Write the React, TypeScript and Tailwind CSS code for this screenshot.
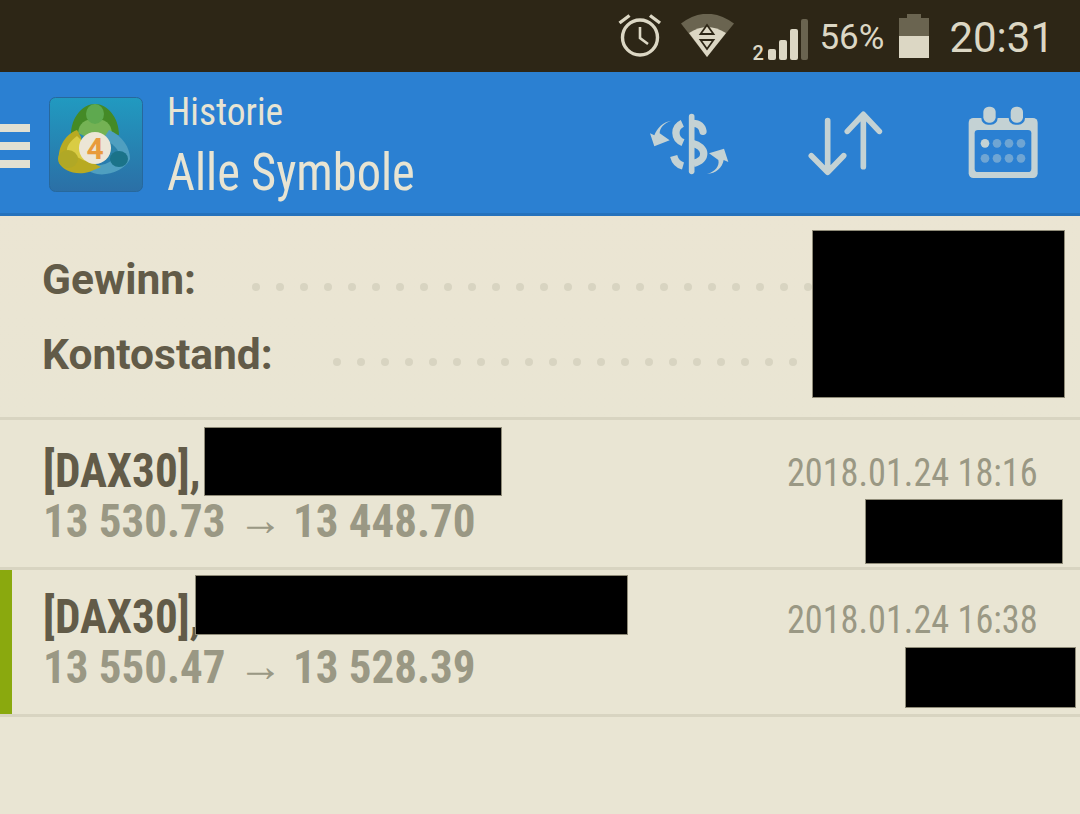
const cond = "[font-stretch:75%]";

function AlarmIcon() {
  return (
    <svg width="44" height="44" viewBox="618 15 44 44" fill="none" stroke="#dcd7c4" strokeWidth="3.4" className="shrink-0">
      <circle cx="640" cy="38.5" r="17.5" />
      <path d="M640 28v11l8 6" strokeWidth="2.6" />
      <path d="M619.5 24l10-7.5M650 16.5l10 7.5" />
    </svg>
  );
}

function WifiIcon() {
  return (
    <svg width="54" height="44" viewBox="681 14 54 44" className="shrink-0">
      <path d="M681 23.5Q707 4 734 23.5L707 57Z" fill="#6a6450" />
      <path d="M689 33Q707 21 726 33L707 57Z" fill="#dcd7c4" />
      <path d="M707 25l6.5 9h-13Z" fill="#dcd7c4" stroke="#2d2616" strokeWidth="1.8" />
      <path d="M700.5 40h13l-6.5 9Z" fill="#dcd7c4" stroke="#2d2616" strokeWidth="1.8" />
    </svg>
  );
}

function SignalBars() {
  return (
    <div className="flex items-end gap-[3px] h-[41px] shrink-0">
      <div className="w-[8px] h-[11px] rounded-[2px] bg-[#dcd7c4]" />
      <div className="w-[8px] h-[20px] rounded-[2px] bg-[#dcd7c4]" />
      <div className="w-[8px] h-[31px] rounded-[2px] bg-[#dcd7c4]" />
      <div className="w-[7px] h-[41px] rounded-[2px] bg-[#6a6450]" />
    </div>
  );
}

function BatteryIcon() {
  return (
    <svg width="30" height="44" viewBox="0 0 30 44" className="shrink-0">
      <path d="M8 0h14v4h8v18H0V4h8Z" fill="#6a6450" />
      <rect x="0" y="22" width="30" height="22" fill="#dcd7c4" />
    </svg>
  );
}

function Logo() {
  return (
    <svg width="94" height="95" viewBox="0 0 94 95" className="shrink-0 ml-[19px] mt-[3px]">
      <defs>
        <linearGradient id="logoBg" x1="0" y1="0" x2="0" y2="1">
          <stop offset="0" stopColor="#219ac0" />
          <stop offset="1" stopColor="#2b6fa6" />
        </linearGradient>
      </defs>
      <rect x="0.5" y="0.5" width="93" height="94" rx="6" fill="url(#logoBg)" stroke="#27689c" />
      {/* green figure */}
      <path d="M22 38C22 20 34 7 46 7s24 13 24 31L58 36 34 36Z" fill="#448a26" />
      <path d="M29 36C30 26 36 22 46 22s16 4 17 14L46 44Z" fill="#74b254" />
      <ellipse cx="46" cy="17" rx="9" ry="10" fill="#5ea94f" />
      {/* blue figure */}
      <path d="M60 33C74 39 81 51 81 62 76 73 60 79 48 77 40 75 34 71 29 65 42 70 56 70 64 62 66 53 61 45 54 42Z" fill="#4f9fc0" />
      <path d="M58 44C66 48 70 54 70 58L54 64Z" fill="#2b82a8" />
      <ellipse cx="70" cy="62" rx="9" ry="8" fill="#1b7389" />
      {/* yellow figure */}
      <path d="M28 33C15 38 8 52 10 66 14 73 26 79 40 75L52 70C44 66 36 60 34 52L32 40Z" fill="#b8aa22" />
      <path d="M28 39C21 44 17 50 18 55L36 64 33 44Z" fill="#d9cc44" />
      <ellipse cx="19" cy="62" rx="10" ry="9" fill="#b0a826" />
      {/* badge */}
      <circle cx="46" cy="51" r="16" fill="#ece6d6" />
      <text x="46" y="62" textAnchor="middle" fontSize="30" fontWeight="700" fill="#e89b3c" fontFamily="Roboto, sans-serif">4</text>
    </svg>
  );
}

function SwapDollarIcon() {
  return (
    <svg width="80" height="64" viewBox="60 60 240 192" fill="none" stroke="#c4d2d4" strokeWidth="22" strokeLinecap="round" className="shrink-0">
      <path d="M188 74V238" strokeWidth="17" />
      <path d="M192 94C210 94 220 104 222 118" />
      <path d="M160 94C134 106 134 140 162 152" strokeLinecap="butt" />
      <path d="M190 154C234 164 236 204 194 214" strokeLinecap="butt" />
      <path d="M134 192C138 208 148 218 162 222" strokeLinecap="butt" />
      <path d="M127 86C104 94 92 108 92 124L122 145 76 163 63 124 76 130C84 108 102 90 127 86Z" fill="#c4d2d4" stroke="none" />
      <path d="M234 246C260 238 272 222 268 204L240 184 285 170 298 210 284 204C280 228 260 244 234 246Z" fill="#c4d2d4" stroke="none" />
    </svg>
  );
}

function SortIcon() {
  return (
    <svg width="78" height="67" viewBox="530 60 234 201" fill="none" stroke="#c4d2d4" strokeWidth="17" strokeLinecap="round" strokeLinejoin="round" className="shrink-0">
      <path d="M595 92V246M546 197l49 50 48-50" />
      <path d="M702 230V74M654 124l48-51 48 51" />
    </svg>
  );
}

function CalendarIcon() {
  const dots = [1063, 1099, 1135, 1171];
  return (
    <svg width="70" height="73" viewBox="1012 48 210 219" className="shrink-0">
      <rect x="1014" y="84" width="207" height="180" rx="14" fill="#c4d2d4" />
      <rect x="1032" y="120" width="170" height="126" rx="10" fill="#2b80d2" />
      <rect x="1052" y="44" width="49" height="60" rx="20" fill="#2b80d2" />
      <rect x="1134" y="44" width="49" height="60" rx="20" fill="#2b80d2" />
      <rect x="1058" y="50" width="37" height="48" rx="16" fill="#c4d2d4" />
      <rect x="1140" y="50" width="37" height="48" rx="16" fill="#c4d2d4" />
      {[160, 205].map((cy) =>
        dots.map((cx) => (
          <circle key={`${cx}-${cy}`} cx={cx} cy={cy} r="13" fill="#c4d2d4" opacity={cx === 1063 && cy === 160 ? 1 : 0.45} />
        ))
      )}
    </svg>
  );
}

function Redacted({ className }: { className: string }) {
  return <div className={`absolute bg-black border border-[#8f8b78] ${className}`} />;
}

function SummaryRow({ label, dots, gap }: { label: string; dots: number; gap: string }) {
  return (
    <div className="flex items-center h-[75px]">
      <span className="text-[42.5px] font-bold text-[#625b48] whitespace-nowrap">{label}</span>
      <div className={`flex gap-[16px] mt-[15px] ${gap}`}>
        {Array.from({ length: dots }).map((_, i) => (
          <div key={i} className="w-[8px] h-[8px] rounded-full bg-[#d8d4c1] shrink-0" />
        ))}
      </div>
    </div>
  );
}

function TradeRow({ from, to, time, marked, height, top, dateTop }: { from: string; to: string; time: string; marked?: boolean; height: string; top: string; dateTop: string }) {
  return (
    <div className={`flex justify-between border-b-[3px] border-[#d8d4c1] pr-[42px] ${height}`}>
      <div className="flex">
        <div className={`w-[12px] h-full ${marked ? "bg-[#8aa90e]" : ""}`} />
        <div className={`pl-[31px] ${top} ${cond} font-bold`}>
          <div className="text-[48px] leading-[50px] text-[#625b48] origin-left scale-x-[0.94] whitespace-nowrap">[DAX30],</div>
          <div className="flex items-center text-[47px] leading-[50px] text-[#9a9884] whitespace-nowrap">
            <span className="w-[195px] origin-left scale-x-[0.957]">{from}</span>
            <span className="w-[55px] text-[45px] font-normal font-['Liberation_Sans',sans-serif] [font-stretch:100%] -translate-y-[1px]">→</span>
            <span className="origin-left scale-x-[0.957]">{to}</span>
          </div>
        </div>
      </div>
      <div className={`${dateTop} ${cond} text-[39px] leading-[50px] text-[#9a9884] origin-right scale-x-[0.93] whitespace-nowrap`}>{time}</div>
    </div>
  );
}

export default function App() {
  return (
    <div className="relative w-[1080px] h-[814px] bg-[#e9e5d3] flex flex-col overflow-hidden font-['Roboto',sans-serif]">
      {/* Status bar */}
      <div className="h-[72px] bg-[#2d2616] shrink-0 flex items-center justify-end pr-[26px] text-[#dcd7c4]">
        <AlarmIcon />
        <div className="ml-[19px] mt-[-1px]"><WifiIcon /></div>
        <span className="ml-[17px] mt-[34px] w-[16px] text-[20px] leading-[20px] font-medium">2</span>
        <div className="mt-[7px]"><SignalBars /></div>
        <span className="ml-[11px] text-[35px] leading-[40px] mt-[3px]">56%</span>
        <div className="ml-[15px]"><BatteryIcon /></div>
        <span className="ml-[20px] text-[42px] leading-[50px] mt-[3px]">20:31</span>
      </div>

      {/* Action bar */}
      <div className="h-[144px] bg-[#2b80d2] border-b-[3px] border-[#2672bc] shrink-0 flex items-center">
        <div className="flex flex-col gap-[10px] w-[30px] mt-[7px] shrink-0">
          <div className="h-[8px] bg-[#e1e0d2]" />
          <div className="h-[8px] bg-[#e1e0d2]" />
          <div className="h-[8px] bg-[#e1e0d2]" />
        </div>
        <Logo />
        <div className={`ml-[24px] mt-[14px] flex flex-col text-[#e8e4d2] ${cond}`}>
          <span className="text-[39.5px] leading-[46px] origin-left scale-x-[0.95] whitespace-nowrap">Historie</span>
          <span className="text-[51px] leading-[76px] origin-left scale-x-[0.95] whitespace-nowrap">Alle Symbole</span>
        </div>
        <div className="ml-auto flex items-center pr-[42px] mt-[2px]">
          <SwapDollarIcon />
          <div className="ml-[77px]"><SortIcon /></div>
          <div className="ml-[84px] mt-[-2px]"><CalendarIcon /></div>
        </div>
      </div>

      {/* Summary */}
      <div className="relative h-[204px] shrink-0 pt-[26px] pl-[42px] border-b-[3px] border-[#d8d4c1] bg-linear-to-b from-[#ebe5d3] to-[#e9e5d3] overflow-hidden">
        <SummaryRow label="Gewinn:" dots={24} gap="ml-[56px]" />
        <SummaryRow label="Kontostand:" dots={20} gap="ml-[60px]" />
        <Redacted className="left-[812px] top-[14px] w-[253px] h-[168px]" />
      </div>

      {/* Deals */}
      <TradeRow from="13 530.73" to="13 448.70" time="2018.01.24 18:16" height="h-[150px]" top="pt-[26px]" dateTop="pt-[28px]" />
      <TradeRow from="13 550.47" to="13 528.39" time="2018.01.24 16:38" marked height="h-[147px]" top="pt-[22px]" dateTop="pt-[25px]" />

      {/* Blacked-out values over the rows */}
      <Redacted className="left-[204px] top-[427px] w-[298px] h-[69px]" />
      <Redacted className="left-[865px] top-[499px] w-[198px] h-[65px]" />
      <Redacted className="left-[195px] top-[575px] w-[433px] h-[60px]" />
      <Redacted className="left-[905px] top-[647px] w-[171px] h-[61px]" />
    </div>
  );
}
